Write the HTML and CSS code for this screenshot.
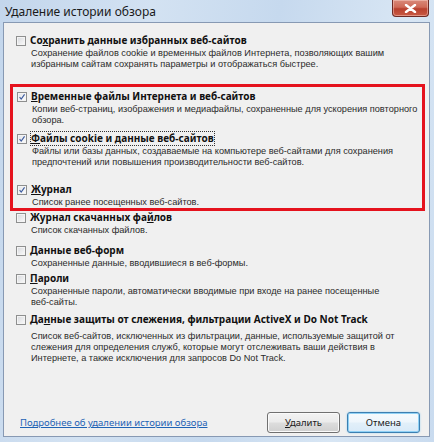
FILE: index.html
```html
<!DOCTYPE html>
<html lang="ru">
<head>
<meta charset="utf-8">
<title>Удаление истории обзора</title>
<link rel="stylesheet" href="styles.css">
</head>
<body>
<div class="window">
  <div class="titlebar">
    <span class="title">Удаление истории обзора</span>
    <span class="close"><svg width="13" height="9" viewBox="0 0 13 9"><path d="M2 1 L11 8 M11 1 L2 8" stroke="#fff" stroke-width="2.4" stroke-linecap="round"/></svg></span>
  </div>
  <div class="panel">
    <div class="item first">
      <div class="head"><span class="cb"></span><span class="label">Со<u>х</u>ранить данные избранных веб-сайтов</span></div>
      <p class="desc">Сохранение файлов cookie и временных файлов Интернета, позволяющих вашим<br>избранным сайтам сохранять параметры и отображаться быстрее.</p>
    </div>
    <div class="group">
      <div class="item">
        <div class="head"><span class="cb checked"><svg width="10" height="10" viewBox="0 0 10 10"><path d="M2 5.2 L4 7.6 L8.2 1.8" fill="none" stroke="#3b5a9e" stroke-width="1.4"/></svg></span><span class="label"><u>В</u>ременные файлы Интернета и веб-сайтов</span></div>
        <p class="desc">Копии веб-страниц, изображения и медиафайлы, сохраненные для ускорения повторного<br>обзора.</p>
      </div>
      <div class="item">
        <div class="head"><span class="cb checked"><svg width="10" height="10" viewBox="0 0 10 10"><path d="M2 5.2 L4 7.6 L8.2 1.8" fill="none" stroke="#3b5a9e" stroke-width="1.4"/></svg></span><span class="label focus"><u>Ф</u>айлы cookie и данные веб-сайтов</span></div>
        <p class="desc">Файлы или базы данных, создаваемые на компьютере веб-сайтами для сохранения<br>предпочтений или повышения производительности веб-сайтов.</p>
      </div>
      <div class="item spaced">
        <div class="head"><span class="cb checked"><svg width="10" height="10" viewBox="0 0 10 10"><path d="M2 5.2 L4 7.6 L8.2 1.8" fill="none" stroke="#3b5a9e" stroke-width="1.4"/></svg></span><span class="label"><u>Ж</u>урнал</span></div>
        <p class="desc">Список ранее посещенных веб-сайтов.</p>
      </div>
    </div>
    <div class="item">
      <div class="head"><span class="cb"></span><span class="label">Журнал скачанных фа<u>й</u>лов</span></div>
      <p class="desc">Список скачанных файлов.</p>
    </div>
    <div class="item gap8">
      <div class="head"><span class="cb"></span><span class="label">Данные веб-форм</span></div>
      <p class="desc">Сохраненные данные, вводившиеся в веб-формы.</p>
    </div>
    <div class="item">
      <div class="head"><span class="cb"></span><span class="label"><u>П</u>ароли</span></div>
      <p class="desc">Сохраненные пароли, автоматически вводимые при входе на ранее посещенные<br>веб-сайты.</p>
    </div>
    <div class="item gap5">
      <div class="head"><span class="cb"></span><span class="label">Да<u>н</u>ные защиты от слежения, фильтрации ActiveX и Do Not Track</span></div>
      <p class="desc wide">Список веб-сайтов, исключенных из фильтрации, данные, используемые защитой от<br>слежения для определения служб, которые могут отслеживать ваши действия в<br>Интернете, а также исключения для запросов Do Not Track.</p>
    </div>
    <div class="footer">
      <a class="link" href="#">Подробнее об удалении истории обзора</a>
      <div class="buttons">
        <button class="btn"><u>У</u>далить</button>
        <button class="btn default">Отмена</button>
      </div>
    </div>
  </div>
</div>
</body>
</html>
```
FILE: styles.css
```css
* { box-sizing: border-box; }
html, body { margin: 0; padding: 0; }
body {
  width: 434px;
  height: 442px;
  overflow: hidden;
  font-family: "Noto Sans", "Open Sans", sans-serif;
  color: #1e1e1e;
}
.window {
  width: 434px;
  height: 442px;
  display: flex;
  flex-direction: column;
  padding: 0 4px 5px 3px;
  background: linear-gradient(100deg, #c3d6ec 0%, #d3e2f2 30%, #c6d9ee 55%, #d8e6f4 80%, #c9dbef 100%);
}
.titlebar {
  height: 22px;
  display: flex;
  justify-content: space-between;
  align-items: flex-start;
  flex-shrink: 0;
}
.title {
  font-size: 12px;
  line-height: 23px;
  padding-left: 2px;
  color: #1a1a1a;
}
.close {
  width: 37px;
  height: 17px;
  margin-right: 1px;
  border: 1px solid #6d2a25;
  border-top: none;
  border-radius: 0 0 4px 4px;
  background: linear-gradient(#d98a7a 0%, #cf6a58 45%, #b8402e 55%, #c95a44 100%);
  box-shadow: inset 0 0 0 1px rgba(255,220,210,0.45);
  display: flex;
  align-items: center;
  justify-content: center;
}
.panel {
  flex: 1;
  display: flex;
  flex-direction: column;
  background: #f0f0f0;
  border: 1px solid #8799b3;
  padding: 11px 4px 3px 6px;
}
.item { padding-left: 6px; }
.item.first { margin-bottom: 14px; }
.item + .item { margin-top: 3px; }
.item.gap8 { margin-top: 8px; }
.item.gap5 { margin-top: 5px; }
.group + .item { margin-top: 0; }
.group {
  border: 3px solid #e5121d;
  padding: 3px 0 0 0;
}
.group .item { padding-left: 4px; }
.group .item + .item { margin-top: 6px; }
.group .item.spaced { margin-top: 15px; }
.head {
  display: flex;
  align-items: center;
  height: 13px;
}
.cb {
  width: 10px;
  height: 10px;
  border: 1px solid #8e8f8f;
  background: linear-gradient(135deg, #d6d8dc, #fbfbfb);
  box-shadow: inset 0 0 0 1px #f4f4f4;
  flex-shrink: 0;
  display: flex;
  align-items: center;
  justify-content: center;
}
.cb svg { display: block; }
.cb.checked { background: linear-gradient(135deg, #e2e4e8, #fdfdfd); }
.label {
  margin-left: 4px;
  font-size: 10px;
  font-weight: 700;
  line-height: 13px;
  color: #111;
  white-space: nowrap;
}
.label.focus { outline: 1px dotted #333; outline-offset: 0; }
u { text-decoration: underline; }
.desc {
  margin: 1px 0 0 0;
  padding-left: 15px;
  font-family: "Liberation Sans", Arial, sans-serif;
  font-size: 9.2px;
  line-height: 11px;
  color: #2a2a2a;
  white-space: nowrap;
}
.desc.wide { margin-top: 5px; }
.footer {
  margin-top: auto;
  display: flex;
  justify-content: space-between;
  align-items: center;
  padding: 0 5px 0 10px;
}
.link {
  font-size: 9.5px;
  color: #1f63b5;
  text-decoration: underline;
}
.buttons { display: flex; gap: 7px; }
.btn {
  width: 73px;
  height: 21px;
  font-family: inherit;
  font-size: 9.5px;
  color: #1a1a1a;
  border: 1px solid #707070;
  border-radius: 3px;
  background: linear-gradient(#f3f3f3 0%, #ebebeb 48%, #dddddd 52%, #cfcfcf 100%);
  box-shadow: inset 0 0 0 1px #fafafa;
  padding: 0;
}
.btn.default {
  border-color: #3c7fb1;
  background: linear-gradient(#f5fafd 0%, #eef6fc 48%, #e2eff9 52%, #d8eaf8 100%);
  box-shadow: inset 0 0 0 1px #8fd1f5, 0 0 2px #9ad0f0;
}
```
